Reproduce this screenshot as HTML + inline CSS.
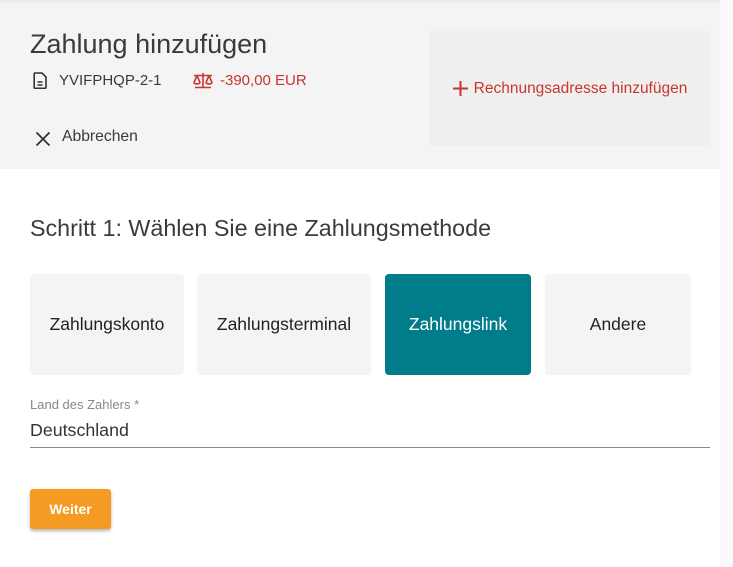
<!DOCTYPE html>
<html><head><meta charset="utf-8"><style>
*{margin:0;padding:0;box-sizing:border-box}
body{width:733px;height:567px;background:#fff;font-family:"Liberation Sans",Arial,sans-serif;position:relative;overflow:hidden}
.hdr{position:absolute;left:0;top:3px;width:720px;height:166px;background:#f4f4f4}
.topstrip{position:absolute;left:0;top:0;width:733px;height:3px;background:#ececec}
.rside{position:absolute;left:720px;top:0;width:13px;height:567px;background:#fafafa}
.t{position:absolute;color:#3a3a3f;white-space:nowrap}
.box{position:absolute;left:429px;top:31px;width:281px;height:115px;background:#efefef;color:#c8372d;font-size:15.5px;display:flex;align-items:center;justify-content:center;white-space:nowrap}
.card{position:absolute;top:274px;height:101px;background:#f4f4f4;border-radius:4px;display:flex;align-items:center;justify-content:center;font-size:17.5px;color:#222}
.sel{background:#007c8a;color:#fff}
</style></head><body>
<div class="topstrip"></div>
<div class="hdr"></div>
<div class="rside"></div>
<div class="t" style="left:30px;top:29px;font-size:27px;">Zahlung hinzufügen</div>
<svg style="position:absolute;left:33px;top:72px" width="14" height="17" viewBox="0 0 14 17"><path d="M2 1h7l4 4v10.5a.8.8 0 0 1-.8.8H2a.8.8 0 0 1-.8-.8V1.8A.8.8 0 0 1 2 1z" fill="none" stroke="#333" stroke-width="1.6"/><path d="M4.5 10h5M4.5 13h5" stroke="#333" stroke-width="1.5"/></svg>
<div class="t" style="left:59px;top:72px;font-size:15px;">YVIFPHQP-2-1</div>
<svg style="position:absolute;left:192px;top:72px" width="22" height="17" viewBox="0 0 22 17"><g fill="none" stroke="#c8372d" stroke-width="1.6"><path d="M11 1v14M3 15.5h16M2 3.5h18M5 3.5l-3 7M5 3.5l3 7M17 3.5l-3 7M17 3.5l3 7"/><path d="M1.5 10.5q3.5 3 7 0M13.5 10.5q3.5 3 7 0"/></g></svg>
<div style="position:absolute;left:220px;top:72px;font-size:15px;color:#c8372d">-390,00 EUR</div>
<svg style="position:absolute;left:35px;top:131px" width="16" height="16" viewBox="0 0 16 16"><path d="M1.5 1.5l13 13M14.5 1.5l-13 13" stroke="#333" stroke-width="1.8"/></svg>
<div class="t" style="left:62px;top:128px;font-size:15.7px;">Abbrechen</div>
<div class="box"><svg width="17" height="17" viewBox="0 0 17 17" style="margin-right:5px"><path d="M8.5 1v15M1 8.5h15" stroke="#c8372d" stroke-width="2"/></svg>Rechnungsadresse hinzufügen</div>
<div class="t" style="left:30px;top:215px;font-size:23.3px;color:#3a3a3f">Schritt 1: Wählen Sie eine Zahlungsmethode</div>
<div class="card" style="left:30px;width:154px">Zahlungskonto</div>
<div class="card" style="left:197px;width:174px">Zahlungsterminal</div>
<div class="card sel" style="left:385px;width:146px">Zahlungslink</div>
<div class="card" style="left:545px;width:146px">Andere</div>
<div style="position:absolute;left:30px;top:397px;font-size:13px;color:#888">Land des Zahlers *</div>
<div style="position:absolute;left:30px;top:420px;font-size:17.8px;color:#333">Deutschland</div>
<div style="position:absolute;left:30px;top:447px;width:680px;height:1px;background:#8a8a8a"></div>
<div style="position:absolute;left:30px;top:489px;width:81px;height:40px;background:#f59b23;border-radius:3px;box-shadow:0 2px 3px rgba(0,0,0,.3);color:#fff;font-weight:bold;font-size:14px;display:flex;align-items:center;justify-content:center">Weiter</div>
</body></html>
